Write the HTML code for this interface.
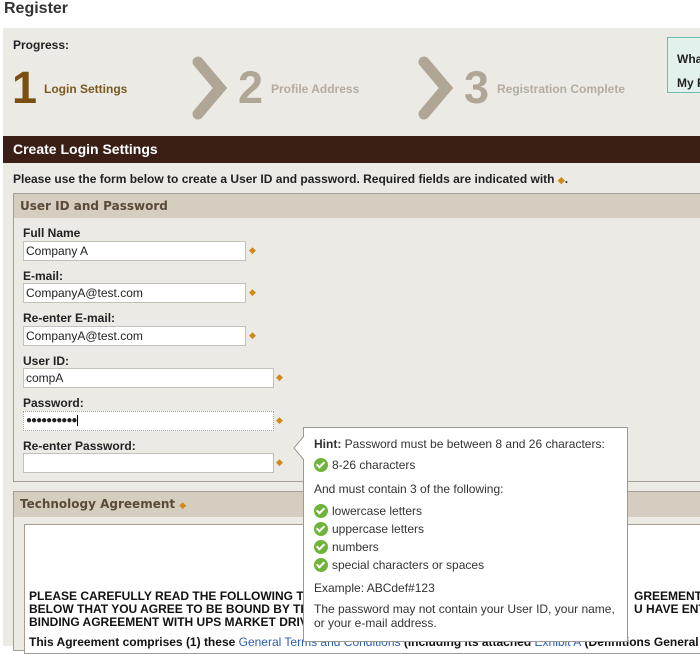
<!DOCTYPE html>
<html><head><meta charset="utf-8"><style>
*{margin:0;padding:0;box-sizing:border-box}
body{width:700px;height:646px;overflow:hidden;background:#fff;font-family:"Liberation Sans",Arial,sans-serif;position:relative;color:#222}
.a{position:absolute}
.lbl{position:absolute;left:23px;font-size:12px;font-weight:bold;color:#222}
.in{position:absolute;left:23px;height:20px;background:#fff;border:1px solid #c4c1ba;font-size:12px;padding:2px 2px;color:#222;line-height:14px}
.dia{position:absolute;color:#d08a1a;font-size:9px}
.hd{position:absolute;background:#d5cdc0;font-family:"DejaVu Sans",Verdana,sans-serif;font-weight:bold;font-size:12px;color:#5a4a3a;padding-left:6px;line-height:24px}
.tip{font-size:12px;color:#333}
.ck{display:inline-block;width:14px;height:14px;border-radius:50%;background:#6fb43c;vertical-align:-3px;margin-right:4px;position:relative}
.ck:after{content:"";position:absolute;left:4px;top:2px;width:3px;height:6px;border:solid #fff;border-width:0 2px 2px 0;transform:rotate(45deg)}
</style></head><body>
<div class="a" style="left:4px;top:0;font-size:16px;font-weight:bold;color:#333">Register</div>
<div class="a" style="left:3px;top:28px;width:697px;height:618px;background:#ebeae4"></div>
<div class="a" style="left:13px;top:38px;font-size:12px;font-weight:bold;color:#222">Progress:</div>
<div class="a" style="left:12px;top:64px;font-size:45px;font-weight:bold;color:#7a4f0f;line-height:48px">1</div>
<div class="a" style="left:44px;top:82px;font-size:12px;font-weight:bold;color:#7a5a20">Login Settings</div>
<svg class="a" style="left:0;top:0" width="700" height="130"><g fill="none" stroke="#b0a696" stroke-width="11" stroke-linecap="round" stroke-linejoin="miter"><path d="M198 62 L220 88 L198 114"/><path d="M424 62 L446 88 L424 114"/></g></svg>
<div class="a" style="left:238px;top:64px;font-size:45px;font-weight:bold;color:#b0a696;line-height:48px">2</div>
<div class="a" style="left:271px;top:82px;font-size:12px;font-weight:bold;color:#b5aca0">Profile Address</div>
<div class="a" style="left:464px;top:64px;font-size:45px;font-weight:bold;color:#b0a696;line-height:48px">3</div>
<div class="a" style="left:497px;top:82px;font-size:12px;font-weight:bold;color:#b5aca0">Registration Complete</div>
<div class="a" style="left:667px;top:37px;width:40px;height:56px;border:1px solid #6cbcb4;background:#e3f1ec;font-size:12px;font-weight:bold;color:#222;padding:9px 0 0 9px;line-height:24px;white-space:nowrap;overflow:hidden">What<br>My P</div>
<div class="a" style="left:3px;top:136px;width:697px;height:27px;background:#3b1f17;color:#fff;font-size:14px;font-weight:bold;padding-left:10px;line-height:27px">Create Login Settings</div>
<div class="a" style="left:13px;top:172px;font-size:12px;font-weight:bold;color:#222">Please use the form below to create a User ID and password. Required fields are indicated with <span style="color:#d08a1a;font-size:9px">◆</span>.</div>
<div class="a" style="left:13px;top:193px;width:700px;height:289px;border:1px solid #a59d93;background:#ebeae4"></div>
<div class="hd" style="left:14px;top:194px;width:690px">User ID and Password</div>
<div class="lbl" style="top:226px">Full Name</div>
<div class="in" style="top:241px;width:223px">Company A</div><div class="dia" style="left:249px;top:245px">◆</div>
<div class="lbl" style="top:269px">E-mail:</div>
<div class="in" style="top:283px;width:223px">CompanyA@test.com</div><div class="dia" style="left:249px;top:287px">◆</div>
<div class="lbl" style="top:311px">Re-enter E-mail:</div>
<div class="in" style="top:326px;width:223px">CompanyA@test.com</div><div class="dia" style="left:249px;top:330px">◆</div>
<div class="lbl" style="top:354px">User ID:</div>
<div class="in" style="top:368px;width:251px">compA</div><div class="dia" style="left:276px;top:372px">◆</div>
<div class="lbl" style="top:396px">Password:</div>
<div class="in" style="top:411px;width:251px;border:1px dotted #6cbcb4;font-size:10px;letter-spacing:-1px">●●●●●●●●●●<span style="border-left:1px solid #000;margin-left:1px"></span></div><div class="dia" style="left:276px;top:415px">◆</div>
<div class="lbl" style="top:439px">Re-enter Password:</div>
<div class="in" style="top:453px;width:251px"></div><div class="dia" style="left:276px;top:457px">◆</div>
<div class="a" style="left:13px;top:491px;width:700px;height:160px;border:1px solid #a59d93;background:#ebeae4"></div>
<div class="hd" style="left:14px;top:492px;width:690px;height:25px">Technology Agreement <span style="color:#d08a1a;font-size:9px">◆</span></div>
<div class="a" style="left:24px;top:524px;width:680px;height:130px;background:#fff;border:1px solid #a59d93;overflow:hidden">
<div class="a" style="left:4px;top:65px;font-size:12px;font-weight:bold;color:#111;line-height:13px;white-space:nowrap">PLEASE CAREFULLY READ THE FOLLOWING TERMS AND CONDITIONS<br>BELOW THAT YOU AGREE TO BE BOUND BY THE TERMS AND CONDITIONS<br>BINDING AGREEMENT WITH UPS MARKET DRIVER, INC.</div>
<div class="a" style="left:606px;top:65px;width:80px;background:#fff;font-size:12px;font-weight:bold;color:#111;line-height:13px;white-space:nowrap;padding-left:3px">GREEMENT. BY<br>U HAVE ENTERED</div>
<div class="a" style="left:4px;top:110px;font-size:12px;font-weight:bold;color:#111;white-space:nowrap">This Agreement comprises (1) these <span style="color:#2a5db0;font-weight:normal">General Terms and Conditions</span> (including its attached <span style="color:#2a5db0;font-weight:normal">Exhibit A</span> (Definitions   General</div>
</div>
<div class="a tip" style="left:303px;top:427px;width:325px;height:215px;background:#fff;border:1px solid #999;padding:9px 0 0 10px;line-height:15px">
<svg class="a" style="left:-11px;top:8px" width="12" height="24"><path d="M11 0 L1 12 L11 24" fill="#fff" stroke="#999"/></svg>
<div><b>Hint:</b> Password must be between 8 and 26 characters:</div>
<div style="margin-top:6px"><span class="ck"></span>8-26 characters</div>
<div style="margin-top:9px">And must contain 3 of the following:</div>
<div style="margin-top:7px"><span class="ck"></span>lowercase letters</div>
<div style="margin-top:3px"><span class="ck"></span>uppercase letters</div>
<div style="margin-top:3px"><span class="ck"></span>numbers</div>
<div style="margin-top:3px"><span class="ck"></span>special characters or spaces</div>
<div style="margin-top:8px">Example: ABCdef#123</div>
<div style="margin-top:6px;line-height:14px">The password may not contain your User ID, your name,<br>or your e-mail address.</div>
</div>
</body></html>
